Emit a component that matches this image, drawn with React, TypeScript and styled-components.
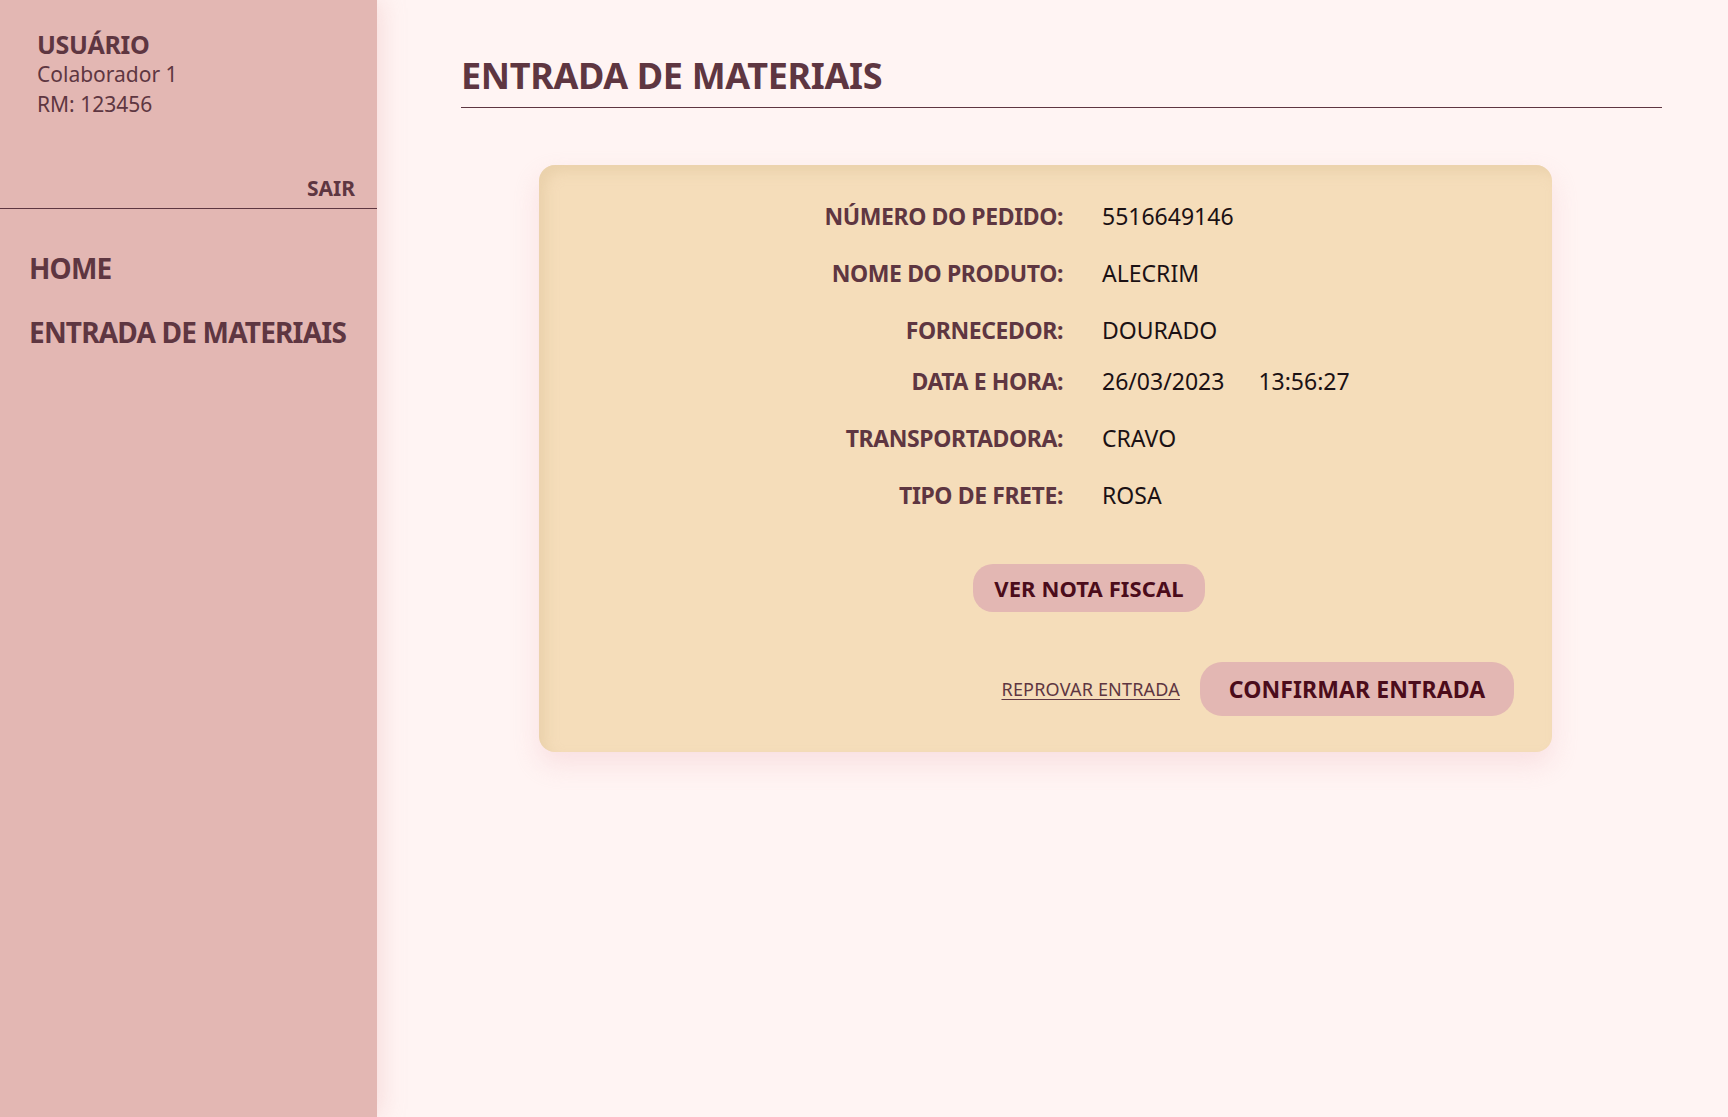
import React from 'react'
import styled, { createGlobalStyle } from 'styled-components'

const GlobalStyle = createGlobalStyle`
  * {
    box-sizing: border-box;
  }
  body {
    margin: 0;
    background: #fff4f3;
    font-family: 'Noto Sans', 'Open Sans', sans-serif;
    color: #5e3641;
  }
`

const Page = styled.div`
  display: flex;
  min-height: 100vh;
`

const Sidebar = styled.aside`
  position: relative;
  z-index: 1;
  flex: 0 0 377px;
  display: flex;
  flex-direction: column;
  background: #e3b7b3;
  box-shadow: 4px 0 22px rgba(232, 176, 176, 0.35);
`

const UserBlock = styled.div`
  display: flex;
  flex-direction: column;
  padding: 29px 22px 5px 37px;
  border-bottom: 1px solid #5e3641;
`

const UserTitle = styled.span`
  font-size: 25px;
  font-weight: 700;
  line-height: 30px;
  letter-spacing: -0.3px;
`

const UserLine = styled.span`
  font-size: 21px;
  line-height: 30px;
`

const Logout = styled.a`
  align-self: flex-end;
  margin-top: 54px;
  font-size: 21px;
  font-weight: 700;
  line-height: 30px;
  cursor: pointer;
`

const Nav = styled.nav`
  display: flex;
  flex-direction: column;
  gap: 28px;
  padding: 41px 0 0 29px;
`

const NavItem = styled.a`
  font-size: 28px;
  font-weight: 700;
  line-height: 36px;
  letter-spacing: -0.8px;
  white-space: nowrap;
  cursor: pointer;
`

const Main = styled.main`
  flex: 1;
  padding: 52px 66px 0 84px;
`

const Title = styled.h1`
  margin: 0;
  padding-bottom: 8px;
  border-bottom: 1px solid #5e3641;
  font-size: 36px;
  font-weight: 700;
  line-height: 47px;
  letter-spacing: -0.35px;
`

const Card = styled.section`
  display: flex;
  flex-direction: column;
  width: 1013px;
  margin: 57px 0 0 78px;
  padding: 37px 38px 36px 0;
  background: #f5ddba;
  border-radius: 16px;
  box-shadow:
    inset 7px 7px 12px rgba(226, 200, 160, 0.55),
    0 12px 26px rgba(242, 200, 204, 0.45);
`

const Fields = styled.dl`
  display: grid;
  grid-template-columns: 524px 1fr;
  column-gap: 39px;
  row-gap: 28px;
  margin: 0;
`

const Label = styled.dt<{ $pull?: boolean }>`
  margin-top: ${(p) => (p.$pull ? '-5px' : '0')};
  text-align: right;
  font-size: 23px;
  font-weight: 700;
  line-height: 28.8px;
  letter-spacing: -0.4px;
`

const Value = styled.dd<{ $pull?: boolean }>`
  display: flex;
  gap: 34px;
  margin: ${(p) => (p.$pull ? '-5px' : '0')} 0 0;
  font-size: 23px;
  line-height: 28.8px;
  color: #1b1114;
`

const PillButton = styled.button<{ $big?: boolean }>`
  display: flex;
  align-items: center;
  justify-content: center;
  width: ${(p) => (p.$big ? '314px' : '232px')};
  height: ${(p) => (p.$big ? '54px' : '48px')};
  padding: 0;
  border: 0;
  border-radius: ${(p) => (p.$big ? '22px' : '20px')};
  background: #e3b7b3;
  color: #4b0c1b;
  font-family: inherit;
  font-size: ${(p) => (p.$big ? '23px' : '22px')};
  font-weight: 700;
  letter-spacing: 0.1px;
  cursor: pointer;
`

const InvoiceButton = styled(PillButton)`
  align-self: flex-start;
  margin: 54px 0 0 434px;
`

const Actions = styled.div`
  display: flex;
  justify-content: flex-end;
  align-items: center;
  gap: 20px;
  margin-top: 50px;
`

const RejectLink = styled.a`
  font-size: 18px;
  letter-spacing: 0.2px;
  color: #5e3641;
  text-decoration: underline;
  text-underline-offset: 3px;
  cursor: pointer;
`

type Field = { label: string; value: React.ReactNode; pull?: boolean }

const fields: Field[] = [
  { label: 'NÚMERO DO PEDIDO:', value: '5516649146' },
  { label: 'NOME DO PRODUTO:', value: 'ALECRIM' },
  { label: 'FORNECEDOR:', value: 'DOURADO' },
  {
    label: 'DATA E HORA:',
    value: (
      <>
        <span>26/03/2023</span>
        <span>13:56:27</span>
      </>
    ),
    pull: true,
  },
  { label: 'TRANSPORTADORA:', value: 'CRAVO' },
  { label: 'TIPO DE FRETE:', value: 'ROSA' },
]

export default function App() {
  return (
    <>
      <GlobalStyle />
      <Page>
        <Sidebar>
          <UserBlock>
            <UserTitle>USUÁRIO</UserTitle>
            <UserLine>Colaborador 1</UserLine>
            <UserLine>RM: 123456</UserLine>
            <Logout>SAIR</Logout>
          </UserBlock>
          <Nav>
            <NavItem>HOME</NavItem>
            <NavItem>ENTRADA DE MATERIAIS</NavItem>
          </Nav>
        </Sidebar>
        <Main>
          <Title>ENTRADA DE MATERIAIS</Title>
          <Card>
            <Fields>
              {fields.map(({ label, value, pull }) => (
                <React.Fragment key={label}>
                  <Label $pull={pull}>{label}</Label>
                  <Value $pull={pull}>{value}</Value>
                </React.Fragment>
              ))}
            </Fields>
            <InvoiceButton>VER NOTA FISCAL</InvoiceButton>
            <Actions>
              <RejectLink>REPROVAR ENTRADA</RejectLink>
              <PillButton $big>CONFIRMAR ENTRADA</PillButton>
            </Actions>
          </Card>
        </Main>
      </Page>
    </>
  )
}
